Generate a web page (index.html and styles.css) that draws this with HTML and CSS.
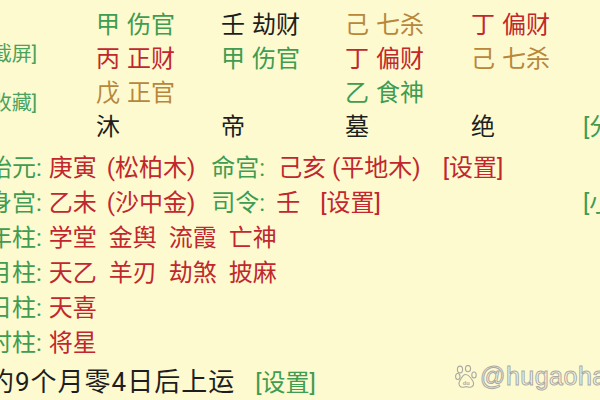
FILE: index.html
```html
<!DOCTYPE html>
<html lang="zh-CN">
<head>
<meta charset="utf-8">
<title>排盘</title>
<link rel="stylesheet" href="styles.css">
</head>
<body>
<div class="page">
  <section class="top">
    <div class="side">
      <span class="tag">[截屏]</span>
      <span class="tag">[收藏]</span>
    </div>
    <div class="pillars">
      <span class="g">甲 伤官</span><span class="k">壬 劫财</span><span class="b">己 七杀</span><span class="r">丁 偏财</span><span></span>
      <span class="r">丙 正财</span><span class="g">甲 伤官</span><span class="r">丁 偏财</span><span class="b">己 七杀</span><span></span>
      <span class="b">戊 正官</span><span></span><span class="g">乙 食神</span><span></span><span></span>
      <span class="k">沐</span><span class="k">帝</span><span class="k">墓</span><span class="k">绝</span><span class="g">[分析]</span>
    </div>
  </section>

  <section class="info">
    <div class="line">
      <div class="main">
        <span class="g">胎元:</span>
        <span class="r val wide">庚寅 (松柏木)</span>
        <span class="g key">命宫:</span>
        <span class="r after-key">己亥 (平地木)</span>
        <span class="r set1">[设置]</span>
      </div>
      <div></div>
    </div>
    <div class="line">
      <div class="main">
        <span class="g">身宫:</span>
        <span class="r val wide">乙未 (沙中金)</span>
        <span class="g key">司令:</span>
        <span class="r after-key2">壬</span>
        <span class="r set2">[设置]</span>
      </div>
      <div class="g">[小运]</div>
    </div>
    <div class="line">
      <div class="main"><span class="g">年柱:</span><span class="r val spaced">学堂 金舆 流霞 亡神</span></div>
      <div></div>
    </div>
    <div class="line">
      <div class="main"><span class="g">月柱:</span><span class="r val spaced">天乙 羊刃 劫煞 披麻</span></div>
      <div></div>
    </div>
    <div class="line">
      <div class="main"><span class="g">日柱:</span><span class="r val">天喜</span></div>
      <div></div>
    </div>
    <div class="line">
      <div class="main"><span class="g">时柱:</span><span class="r val">将星</span></div>
      <div></div>
    </div>
    <div class="line last">
      <div class="main"><span class="k luck">约9个月零4日后上运</span><span class="g set3">[设置]</span></div>
      <div></div>
    </div>
  </section>

  <div class="watermark">
    <svg class="paw" viewBox="0 0 22 24" width="22" height="24" aria-hidden="true">
      <g fill="none" stroke="#a9a9a2" stroke-width="1.1">
        <ellipse cx="5" cy="4.5" rx="2.6" ry="3.4"/>
        <ellipse cx="13" cy="3.6" rx="2.6" ry="3.2"/>
        <ellipse cx="2.8" cy="11.5" rx="2.2" ry="3"/>
        <ellipse cx="19" cy="10" rx="2.2" ry="3"/>
        <path d="M10.5 9.5 C7.5 9.5 6.5 13.5 4.8 15.8 C3 18.5 4.2 22.5 7.6 22.3 C9.2 22.2 10 21.6 11.2 21.6 C12.6 21.6 13.6 22.5 15.4 22.3 C18.6 22 19.4 18.6 17.8 16 C16 13.2 14 9.5 10.5 9.5 Z"/>
      </g>
      <text x="11.2" y="20.3" font-size="5.6" text-anchor="middle" fill="#a9a9a2" font-family="Liberation Sans, sans-serif" font-weight="bold">du</text>
    </svg>
    <span class="wm-text">@hugaohao</span>
  </div>
</div>
</body>
</html>
```

FILE: styles.css
```css
html, body {
  margin: 0;
  padding: 0;
  overflow: hidden;
  background: #fdfad0;
}

body {
  width: 600px;
  height: 400px;
  font-family: "Roboto", "Noto Sans CJK SC", sans-serif;
  font-size: 24px;
  color: #1e1e1e;
}

.page {
  position: relative;
  margin-left: -12px;
  width: 660px;
  height: 400px;
  padding-top: 8px;
  box-sizing: border-box;
}

.g { color: #3f9c50; }
.r { color: #c1272d; }
.b { color: #b8873c; }
.k { color: #1e1e1e; }

.top {
  display: flex;
}

.side {
  width: 108px;
  box-sizing: border-box;
  padding-right: 59px;
  padding-top: 29px;
  display: flex;
  flex-direction: column;
  align-items: flex-end;
  gap: 15px;
}

.tag {
  font-size: 20px;
  line-height: 34px;
  color: #4aa35c;
  white-space: nowrap;
}

.pillars {
  display: grid;
  grid-template-columns: 125px 124px 126px 112px auto;
  grid-auto-rows: 34px;
  line-height: 34px;
  white-space: nowrap;
  word-spacing: 1px;
}

.info {
  margin-top: 7px;
}

.line {
  display: grid;
  grid-template-columns: 595px auto;
  line-height: 35px;
  white-space: nowrap;
}

.main {
  display: flex;
  align-items: baseline;
}

.line.last {
  margin-top: 4px;
}

.val { margin-left: 7px; }
.wide { word-spacing: 4px; }
.spaced { word-spacing: 6px; }
.key { margin-left: 16px; }
.after-key { margin-left: 13px; }
.after-key2 { margin-left: 11px; }

.set1 { margin-left: 22px; }
.set2 { margin-left: 20px; }
.set3 { margin-left: 20px; font-size: 24px; }

.luck {
  font-size: 26px;
  letter-spacing: 1px;
}

.watermark {
  position: absolute;
  left: 467px;
  top: 362px;
  display: flex;
  align-items: center;
  gap: 3px;
}

.wm-text {
  font-family: "Liberation Sans", Arial, sans-serif;
  font-size: 25px;
  color: #fbf9e4;
  -webkit-text-stroke: 1px #aaaaa3;
  letter-spacing: 0.5px;
}
```
